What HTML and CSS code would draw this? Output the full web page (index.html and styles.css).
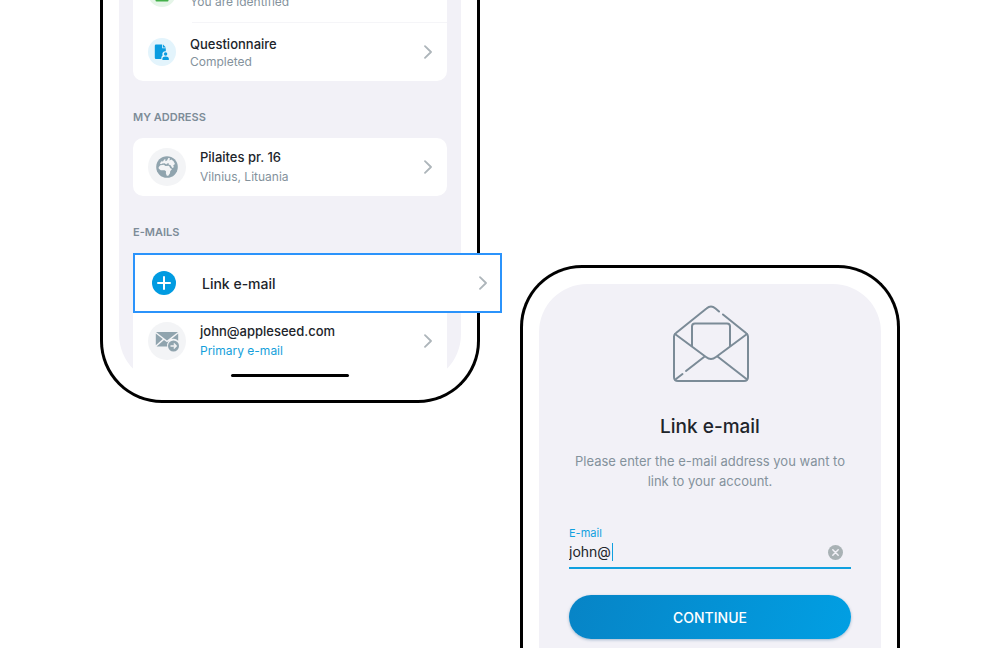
FILE: index.html
```html
<!DOCTYPE html>
<html lang="en">
<head>
<meta charset="utf-8">
<title>Link e-mail</title>
<link rel="stylesheet" href="styles.css">
</head>
<body>
<svg class="sprite" aria-hidden="true">
  <symbol id="chevron" viewBox="0 0 8 14"><path d="M1 1.2 7 7 1 12.8" fill="none" stroke="#adb5ba" stroke-width="1.8" stroke-linecap="round" stroke-linejoin="round"/></symbol>
</svg>
<main class="stage">
  <section class="phone phone-profile">
    <div class="screen screen-profile">
      <div class="card card-top">
        <a class="row row-first" href="#">
          <span class="badge badge-green"><svg width="14" height="18" viewBox="0 0 14 18"><rect x="0.5" y="0" width="13" height="17.500" rx="1" fill="#43b049"/></svg></span>
          <span class="label"><span class="sub">You are identified</span></span>
        </a>
        <a class="row row-compact" href="#">
          <span class="badge badge-blue"><svg width="16" height="16" viewBox="0 0 16 16" fill="#0a9ce0"><path d="M2 .5h6.200v3.700h3.600v3a3 3 0 0 0-3.200 4.200C7.700 12 7.300 12.800 7.300 15H2A1.200 1.200 0 0 1 .8 13.800V1.700A1.200 1.200 0 0 1 2 .5Z"/><path d="m9 .6 2.900 2.900H9Z"/><circle cx="11.600" cy="10" r="1.700"/><path d="M8.400 16v-1.400c0-1.300 1.200-2 3.200-2s3.200.7 3.200 2V16Z"/></svg></span>
          <span class="label"><span class="title">Questionnaire</span><span class="sub">Completed</span></span>
          <svg class="chevron"><use href="#chevron"/></svg>
        </a>
      </div>
      <h2 class="heading">MY ADDRESS</h2>
      <div class="card">
        <a class="row" href="#">
          <span class="badge badge-large"><svg width="22" height="22" viewBox="0 0 22 22"><circle cx="11" cy="11" r="10.800" fill="#90a4ae"/><g fill="#f3f4f6"><path d="M2.600 11.200 4.300 9.300 7.800 8.800 9.500 10 13 9.800 14.300 12.300 16 13 14.200 15.300 14 17.300 12.300 19.700 10.800 19.800 9.900 17.500 10 15.300 8.600 14.200 4.800 14.200 2.800 12.800Z"/><path d="M3.800 7.600 5.500 5.200 7 5.600 8.200 3.400 9.500 3.200 9.300 5.200 11 4.600 12.300 2 14 2.300 13.400 4.500 15.400 3.600 17.600 5.200 19 8 17.300 9.200 17.800 11.200 16.300 12 14.600 9.300 12.600 8.600 12.900 7.200 11 7.400 10.400 8.400 8.600 7.200 6.200 7.400 5.200 8.300Z"/></g></svg></span>
          <span class="label"><span class="title">Pilaites pr. 16</span><span class="sub">Vilnius, Lituania</span></span>
          <svg class="chevron"><use href="#chevron"/></svg>
        </a>
      </div>
      <h2 class="heading">E-MAILS</h2>
      <a class="link-row" href="#">
        <svg class="plus" width="24" height="24" viewBox="0 0 24 24"><circle cx="12" cy="12" r="12" fill="#019be1"/><path d="M12 6v12M6 12h12" stroke="#fff" stroke-width="2" stroke-linecap="round"/></svg>
        <span class="link-title">Link e-mail</span>
        <svg class="chevron"><use href="#chevron"/></svg>
      </a>
      <div class="card card-bottom">
        <a class="row row-last" href="#">
          <span class="badge badge-large"><svg width="24" height="22" viewBox="0 0 24 22"><path fill="#90a4ae" d="M1 2h22L12 10.500ZM.8 3.500 7.800 9 .8 15.200ZM23.200 3.500v7.200A6.500 6.500 0 0 0 16.500 9ZM9 10l3 2.200 1.800-1.100A6.500 6.500 0 0 0 12.200 16.500H1.500Z"/><circle cx="18.500" cy="16" r="5.500" fill="#90a4ae"/><path d="M15.500 16h5.500M18.800 13.600 21.200 16l-2.400 2.400" fill="none" stroke="#f3f4f6" stroke-width="1.400"/></svg></span>
          <span class="label"><span class="title">john@appleseed.com</span><span class="sub sub-link">Primary e-mail</span></span>
          <svg class="chevron"><use href="#chevron"/></svg>
        </a>
        <div class="home"><div class="home-bar"></div></div>
      </div>
    </div>
  </section>

  <section class="phone phone-form">
    <form class="screen screen-form">
      <svg class="envelope" width="78" height="78" viewBox="-2 0 78 78" fill="none" stroke="#7b8b97" stroke-width="2" stroke-linecap="round" stroke-linejoin="round"><path d="M46 6.500 42.500 3.500Q38 -.5 33.500 3.500L3 28Q1 29.500 1 31.500V72Q1 76 5 76H71Q75 76 75 72V31.500Q75 29.500 73 28L50 9.500"/><path d="M2 29 33 52Q38 56 43 52L74 29"/><path d="M19 41V21.500Q19 18.500 22 18.500H54Q57 18.500 57 21.500V41"/><path d="M44.500 51.500 73.500 74M31 52 13 66M9.500 69 3 74"/></svg>
      <h1 class="form-title">Link e-mail</h1>
      <p class="form-text">Please enter the e-mail address you want to link to your account.</p>
      <div class="field">
        <label class="field-label" for="email">E-mail</label>
        <div class="field-line">
          <input class="field-input" id="email" type="text" value="john@">
          <span class="caret"></span>
          <button class="clear" type="button" aria-label="Clear"><svg width="15" height="15" viewBox="0 0 15 15"><circle cx="7.500" cy="7.500" r="7.500" fill="#a9b2b5"/><path d="m4.800 4.800 5.400 5.400m0-5.400-5.400 5.400" stroke="#f2f1f7" stroke-width="1.500" stroke-linecap="round"/></svg></button>
        </div>
      </div>
      <button class="continue" type="button">CONTINUE</button>
    </form>
  </section>
</main>
</body>
</html>
```
FILE: styles.css
```css
* { box-sizing: border-box; }

body {
  margin: 0;
  overflow: hidden;
  background: #fff;
  color: #20242a;
  font-family: Inter, "Liberation Sans", sans-serif;
}

a { color: inherit; text-decoration: none; }
.sprite { position: absolute; width: 0; height: 0; }

.stage {
  display: grid;
  grid-template-columns: repeat(2, minmax(0, 380px));
  justify-content: center;
  align-items: start;
  gap: 40px;
  height: 100vh;
  overflow: hidden;
}

.phone { border: 3px solid #000; padding: 16px; }
.screen { background: #f2f1f7; }

.phone-profile {
  margin-top: -37px;
  border-top: 0;
  padding-top: 0;
  border-radius: 0 0 62px 62px;
}
.screen-profile {
  display: flex;
  flex-direction: column;
  padding: 0 14px;
  border-radius: 0 0 50px 50px;
}

.card { background: #fff; border-radius: 10px; }
.card-top { border-radius: 0 0 10px 10px; }
.card-bottom { border-radius: 0; }

.row {
  display: flex;
  align-items: center;
  gap: 14px;
  min-height: 58px;
  padding: 0 15px;
}
.row-first, .row-compact { min-height: 59px; }
.row-last { min-height: 56px; }
.row-first .label { padding-top: 18px; line-height: 17px; }
.row-compact .label { padding-top: 2px; line-height: 17px; }
.row-compact {
  background: linear-gradient(#f5f5f8, #f5f5f8) right top / calc(100% - 59px) 1px no-repeat;
}

.label {
  display: flex;
  flex: 1;
  flex-direction: column;
  line-height: 19px;
}
.title { font-size: 13px; font-weight: 500; }
.sub { color: #84929c; font-size: 12px; }
.sub-link { color: #159fdb; }

.badge {
  display: grid;
  flex: none;
  place-items: center;
  width: 28px;
  height: 28px;
  border-radius: 50%;
}
.badge-green { background: #e5f5e8; }
.badge-blue { background: #e3f4fc; }
.badge-large { width: 38px; height: 38px; background: #f3f4f6; }
.chevron { flex: none; width: 8px; height: 14px; }

.heading {
  margin: 28px 0 13px;
  color: #7d8c97;
  font-size: 11px;
  font-weight: 600;
  line-height: 16px;
}

.link-row {
  display: flex;
  align-items: center;
  gap: 26px;
  min-height: 60px;
  margin-right: -55px;
  padding: 0 13px 0 17px;
  border: 2px solid #2b93fb;
  background: #fff;
}
.link-title { flex: 1; font-size: 14px; font-weight: 500; }

.home {
  display: flex;
  justify-content: center;
  padding: 5px 0 7px;
}
.home-bar {
  width: 118px;
  height: 3px;
  border-radius: 2px;
  background: #000;
}

.phone-form {
  margin-top: 265px;
  border-bottom: 0;
  padding-bottom: 0;
  border-radius: 62px 62px 0 0;
}
.screen-form {
  display: flex;
  flex-direction: column;
  padding: 21px 30px 24px;
  border-radius: 48px 48px 0 0;
}
.envelope { align-self: center; }
.form-title {
  margin: 32px 0 12px;
  font-size: 19px;
  font-weight: 500;
  line-height: 24px;
  text-align: center;
}
.form-text {
  margin: 0;
  color: #84929c;
  font-size: 13px;
  line-height: 20px;
  text-align: center;
}

.field { margin-top: 34px; border-bottom: 2px solid #10a0df; }
.field-label {
  display: block;
  color: #10a0df;
  font-size: 11px;
  line-height: 16px;
}
.field-line {
  display: flex;
  align-items: center;
  height: 26px;
  padding: 0 8px 4px 0;
}
.field-input {
  field-sizing: content;
  border: 0;
  padding: 0;
  outline: 0;
  background: none;
  color: #20242a;
  font: 14px/20px Inter, "Liberation Sans", sans-serif;
}
.caret { width: 1px; height: 18px; margin-left: 1px; background: #10a0df; }
.clear {
  display: flex;
  margin-left: auto;
  border: 0;
  padding: 0;
  background: none;
}
.continue {
  height: 44px;
  margin-top: 26px;
  border: 0;
  border-radius: 22px;
  padding: 2px 0 0;
  background: linear-gradient(110deg, #0784c6, #019fe3);
  box-shadow: 0 1px 3px rgba(20, 80, 130, 0.35);
  color: #fff;
  font: 500 14px/20px Inter, "Liberation Sans", sans-serif;
}
```
